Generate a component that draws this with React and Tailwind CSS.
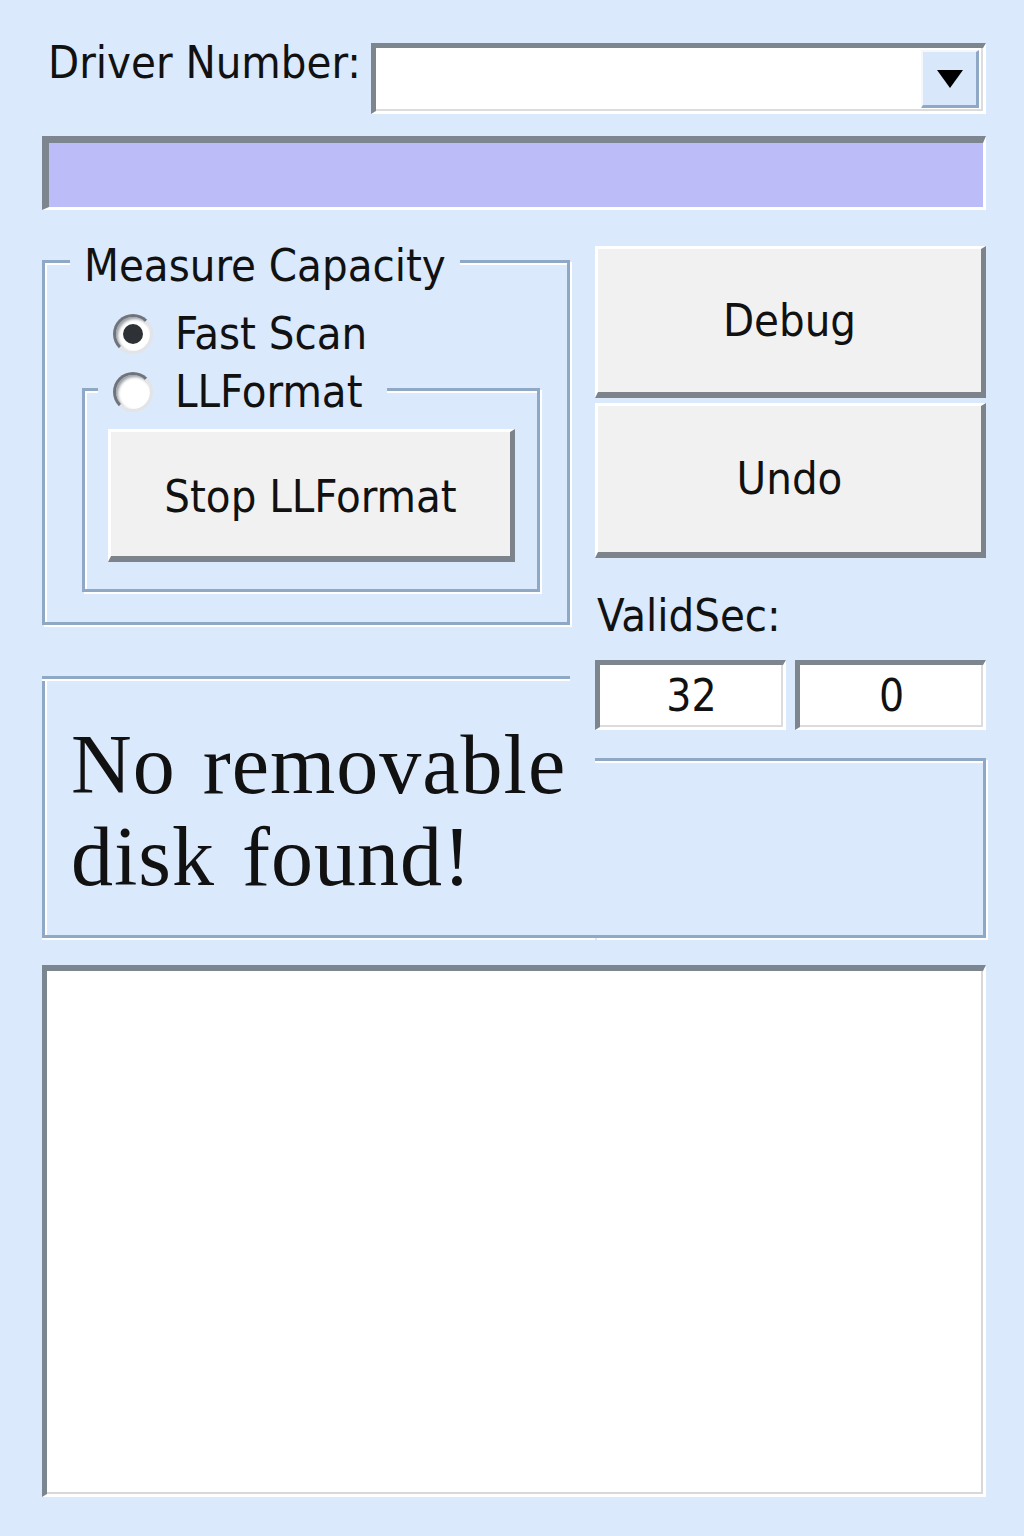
import React from "react";

// classic win32-ish dialog, light blue theme
const ui = "font-['DejaVu_Sans_Condensed','DejaVu_Sans',sans-serif] font-stretch-condensed text-[#111]";

function Radio({ checked }) {
  return (
    <div className="w-[40px] h-[40px] shrink-0 rounded-full bg-white border-[3px] border-t-[#6f747b] border-l-[#6f747b] border-r-[#e2e4e8] border-b-[#e2e4e8] shadow-[inset_2px_2px_3px_#9aa0a8] flex items-center justify-center">
      {checked && <div className="w-[20px] h-[20px] rounded-full bg-[#2e3135]" />}
    </div>
  );
}

function RaisedButton({ children, className = "" }) {
  return (
    <button className={`bg-[#f1f1f1] border-t-[3px] border-l-[3px] border-t-white border-l-white border-b-[6px] border-r-[5px] border-b-[#7d838b] border-r-[#7d838b] flex items-center justify-center text-[45px] whitespace-nowrap ${className}`}>
      {children}
    </button>
  );
}

function InsetBox({ children, className = "" }) {
  return (
    <div className={`bg-white border-t-[5px] border-l-[5px] border-t-[#7d858e] border-l-[#7d858e] border-b-[3px] border-r-[3px] border-b-white border-r-white shadow-[inset_-2px_-2px_0_#dcdcdc] ${className}`}>
      {children}
    </div>
  );
}

export default function App() {
  return (
    <div className={`w-[1024px] h-[1536px] bg-[#dae9fb] pl-[42px] pr-[38px] pt-[43px] ${ui}`}>
      {/* driver row */}
      <div className="flex items-start h-[71px]">
        <div className="w-[329px] pl-[6px] text-[45px] leading-none whitespace-nowrap -mt-[3px]">Driver Number:</div>
        <InsetBox className="flex-1 h-[71px] flex justify-end pr-[4px] pt-[2px] pb-[3px]">
          <div className="w-[58px] h-full bg-[#d8e7f9] border-l-2 border-t-2 border-l-[#f4f8fc] border-t-[#f4f8fc] border-r-[3px] border-b-[3px] border-r-[#8ea8c6] border-b-[#8ea8c6] flex items-center justify-center">
            <svg width="28" height="20" viewBox="0 0 28 20">
              <path d="M1 1 L27 1 L14 19 Z" fill="#000" />
            </svg>
          </div>
        </InsetBox>
      </div>

      {/* progress bar */}
      <div className="mt-[22px] h-[74px] bg-[#bcbdf8] border-t-[7px] border-l-[7px] border-t-[#7d858e] border-l-[#7d858e] border-b-[3px] border-r-[3px] border-b-white border-r-white" />

      {/* middle */}
      <div className="mt-[36px] flex">
        <div className="w-[553px] flex flex-col">
          <div className="relative mt-[14px] mr-[25px] h-[365px] border-[3px] border-[#8ea8c6] shadow-[inset_2px_2px_0_#fff,2px_2px_0_#fff] pt-[46px] pl-[37px] pr-[27px]">
            <div className="absolute left-[25px] -top-[25px] bg-[#dae9fb] px-[14px] text-[45px] leading-[56px] whitespace-nowrap">Measure Capacity</div>
            <div className="flex items-center h-[50px] pl-[31px] gap-[22px] text-[45px]">
              <Radio checked />
              <span className="leading-[50px] whitespace-nowrap">Fast Scan</span>
            </div>
            <div className="relative mt-[29px] h-[204px] border-[3px] border-[#8ea8c6] shadow-[inset_2px_2px_0_#fff,2px_2px_0_#fff] pt-[38px] pl-[23px] pr-[22px]">
              <div className="absolute left-[13px] -top-[24px] bg-[#dae9fb] pl-[15px] pr-[24px] flex items-center h-[50px] gap-[22px] text-[45px]">
                <Radio />
                <span className="leading-[50px] whitespace-nowrap">LLFormat</span>
              </div>
              <RaisedButton className="w-full h-[133px] pt-[6px]">Stop LLFormat</RaisedButton>
            </div>
          </div>
          <div className="mt-[51px] h-[262px] border-l-[3px] border-b-[3px] border-[#8ea8c6] shadow-[inset_2px_0_0_#fff,0_2px_0_#fff] flex flex-col">
            <div className="-ml-[3px] mr-[25px] h-[5px] border-t-[3px] border-b-2 border-t-[#8ea8c6] border-b-white" />
            <div className="pl-[26px] pt-[38px] font-['Liberation_Serif',serif] font-stretch-normal text-[84px] leading-[92px] tracking-[1px] [word-spacing:5px] text-[#111]">
              No removable<br />disk found!
            </div>
          </div>
        </div>

        <div className="flex-1 flex flex-col">
          <RaisedButton className="h-[152px]">Debug</RaisedButton>
          <RaisedButton className="mt-[5px] h-[155px]">Undo</RaisedButton>
          <div className="mt-[33px] pl-[2px] text-[45px] leading-[50px]">ValidSec:</div>
          <div className="mt-[19px] flex gap-[9px]">
            <InsetBox className="flex-1 h-[70px] flex items-center justify-center text-[44px]">32</InsetBox>
            <InsetBox className="flex-1 h-[70px] flex items-center justify-center text-[44px]">0</InsetBox>
          </div>
          <div className="mt-[28px] flex-1 border-t-[3px] border-r-[3px] border-b-[3px] border-[#8ea8c6] shadow-[inset_0_2px_0_#fff,2px_2px_0_#fff]" />
        </div>
      </div>

      {/* log area */}
      <div className="mt-[27px] h-[532px] bg-white border-t-[6px] border-l-[5px] border-t-[#7c8690] border-l-[#7c8690] border-b-[3px] border-r-[3px] border-b-white border-r-white shadow-[inset_-2px_-2px_0_#d8d8d8]" />
    </div>
  );
}
